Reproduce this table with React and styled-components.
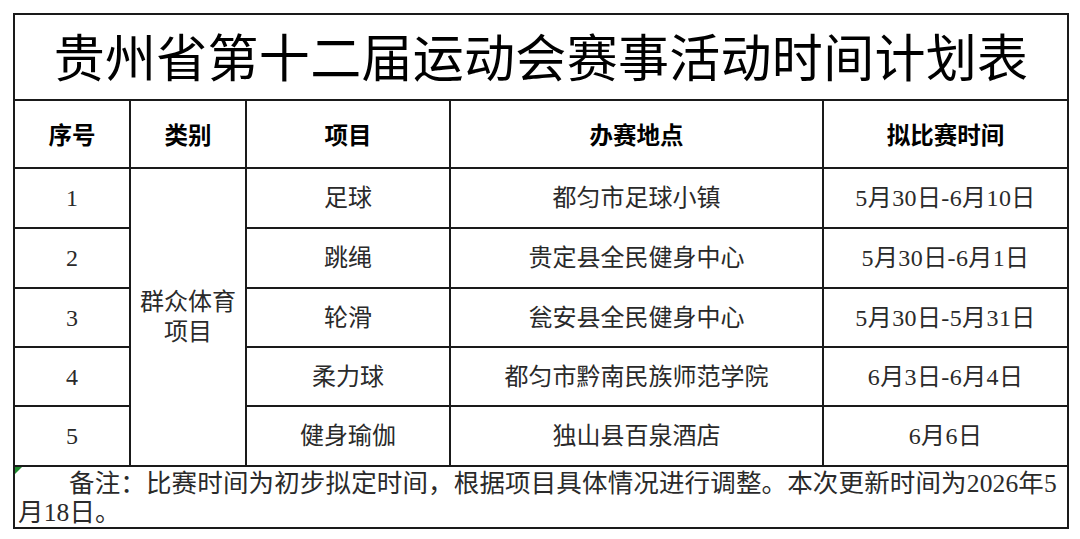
import React from "react";
import styled, { createGlobalStyle } from "styled-components";

const Global = createGlobalStyle`
  html, body { margin: 0; padding: 0; background: #fff; }
  body { font-family: "Liberation Serif", "Noto Sans CJK SC", serif; }
`;

const Page = styled.div`
  width: 1080px;
  height: 539px;
  padding: 13px 0 0 13px;
  box-sizing: border-box;
`;

const Table = styled.table`
  border-collapse: collapse;
  table-layout: fixed;
  width: 1054px;
  height: 513px;
  color: #2a2a2a;
  font-family: "Liberation Serif", "Noto Sans CJK SC", serif;
`;

const Row = styled.tr`
  height: ${(p) => p.$h}px;
`;

const Cell = styled.td`
  border: 2px solid #1a1a1a;
  padding: 0;
  text-align: center;
  vertical-align: middle;
  font-size: 24px;
  line-height: 30px;
  box-sizing: border-box;
`;

const TimeCell = styled(Cell)`
  letter-spacing: 0.4px;
`;

const TitleCell = styled(Cell)`
  font-size: 51px;
  line-height: 60px;
  color: #000;
  padding-top: 6px;
  letter-spacing: 0.3px;
`;

const HeadCell = styled(Cell)`
  font-family: "Noto Sans CJK SC", sans-serif;
  font-weight: 700;
  font-size: 23.5px;
  color: #000;
`;

const NoteCell = styled(Cell)`
  position: relative;
  text-align: left;
  vertical-align: top;
  font-size: 25.5px;
  line-height: 29px;
  padding: 2px 0 0 3px;
  text-indent: 2em;
  letter-spacing: 0.15px;

  &::before {
    content: "";
    position: absolute;
    left: 0;
    top: 0;
    width: 0;
    height: 0;
    border-top: 7px solid #1e8a2e;
    border-right: 7px solid transparent;
  }
`;

const cols = [116, 116, 204, 373, 245];

const rows = [
  ["1", "足球", "都匀市足球小镇", "5月30日-6月10日", 60],
  ["2", "跳绳", "贵定县全民健身中心", "5月30日-6月1日", 60],
  ["3", "轮滑", "瓮安县全民健身中心", "5月30日-5月31日", 59],
  ["4", "柔力球", "都匀市黔南民族师范学院", "6月3日-6月4日", 59],
  ["5", "健身瑜伽", "独山县百泉酒店", "6月6日", 60],
];

export default function App() {
  return (
    <>
      <Global />
      <Page>
        <Table>
          <colgroup>
            {cols.map((w, i) => (
              <col key={i} style={{ width: w }} />
            ))}
          </colgroup>
          <tbody>
            <Row $h={86}>
              <TitleCell colSpan={5}>贵州省第十二届运动会赛事活动时间计划表</TitleCell>
            </Row>
            <Row $h={68}>
              <HeadCell>序号</HeadCell>
              <HeadCell>类别</HeadCell>
              <HeadCell>项目</HeadCell>
              <HeadCell>办赛地点</HeadCell>
              <HeadCell>拟比赛时间</HeadCell>
            </Row>
            {rows.map(([n, item, place, time, h], i) => (
              <Row key={n} $h={h}>
                <Cell>{n}</Cell>
                {i === 0 && <Cell rowSpan={5}>群众体育项目</Cell>}
                <Cell>{item}</Cell>
                <Cell>{place}</Cell>
                <TimeCell>{time}</TimeCell>
              </Row>
            ))}
            <Row $h={61}>
              <NoteCell colSpan={5}>
                备注：比赛时间为初步拟定时间，根据项目具体情况进行调整。本次更新时间为2026年5
                <br />
                月18日。
              </NoteCell>
            </Row>
          </tbody>
        </Table>
      </Page>
    </>
  );
}
